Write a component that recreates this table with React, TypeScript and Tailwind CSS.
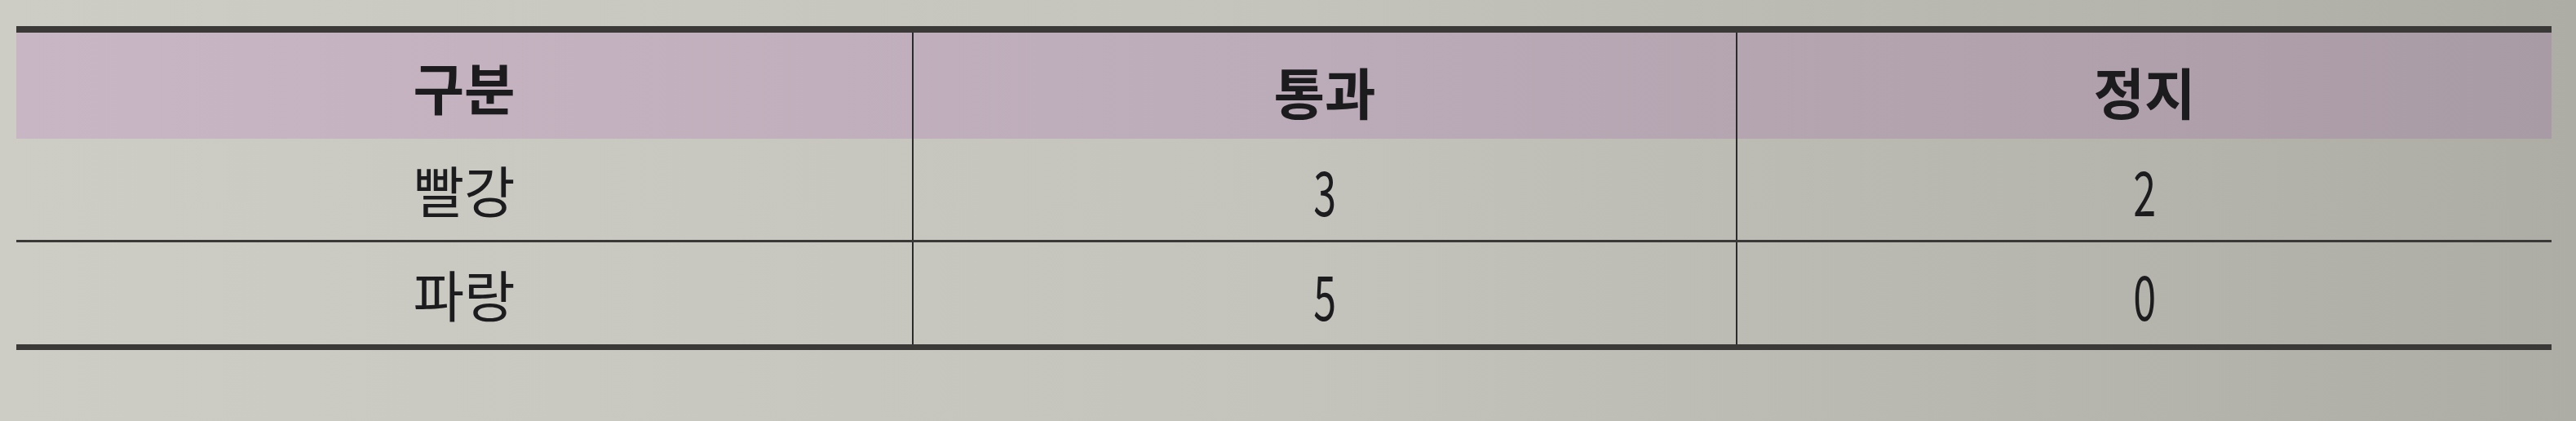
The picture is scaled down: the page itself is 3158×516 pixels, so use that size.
const rows = [
  { label: "빨강", pass: "3", stop: "2" },
  { label: "파랑", pass: "5", stop: "0" },
];

const font = "font-['Noto_Sans_CJK_KR','Noto_Sans',sans-serif]";

function Num({ value }: { value: string }) {
  return <span className="inline-block scale-x-[0.66] font-normal text-[76px] leading-none">{value}</span>;
}

export default function App() {
  return (
    <div className={`w-[3158px] h-[516px] bg-linear-to-r from-[#cdcdc6] via-[#c4c3bc] to-[#aeada5] pt-[32px] pl-[20px] text-[#1c1b1d] ${font}`}>
      <div className="w-[3108px] border-t-[8px] border-b-[7px] border-[#3a3937]">
        <div className="grid grid-cols-[1098px_1010px_1000px] h-[130px] bg-linear-to-r from-[#c9b6c4] via-[#bcabb8] to-[#a99ba6] font-bold text-[68px] leading-none">
          <div className="flex items-center justify-center pt-[2px]">구분</div>
          <div className="flex items-center justify-center pt-[14px] border-l-2 border-[#2c2b2c]">통과</div>
          <div className="flex items-center justify-center pt-[14px] border-l-2 border-[#2c2b2c]">정지</div>
        </div>
        {rows.map((row, i) => (
          <div
            key={row.label}
            className={`grid grid-cols-[1098px_1010px_1000px] text-[68px] leading-none ${i === 0 ? "h-[127px] border-b-[3px] border-[#3a3937]" : "h-[125px]"}`}
          >
            <div className="flex items-center justify-center">{row.label}</div>
            <div className="flex items-center justify-center border-l-2 border-[#2c2b2c]">
              <Num value={row.pass} />
            </div>
            <div className="flex items-center justify-center border-l-2 border-[#2c2b2c]">
              <Num value={row.stop} />
            </div>
          </div>
        ))}
      </div>
    </div>
  );
}
